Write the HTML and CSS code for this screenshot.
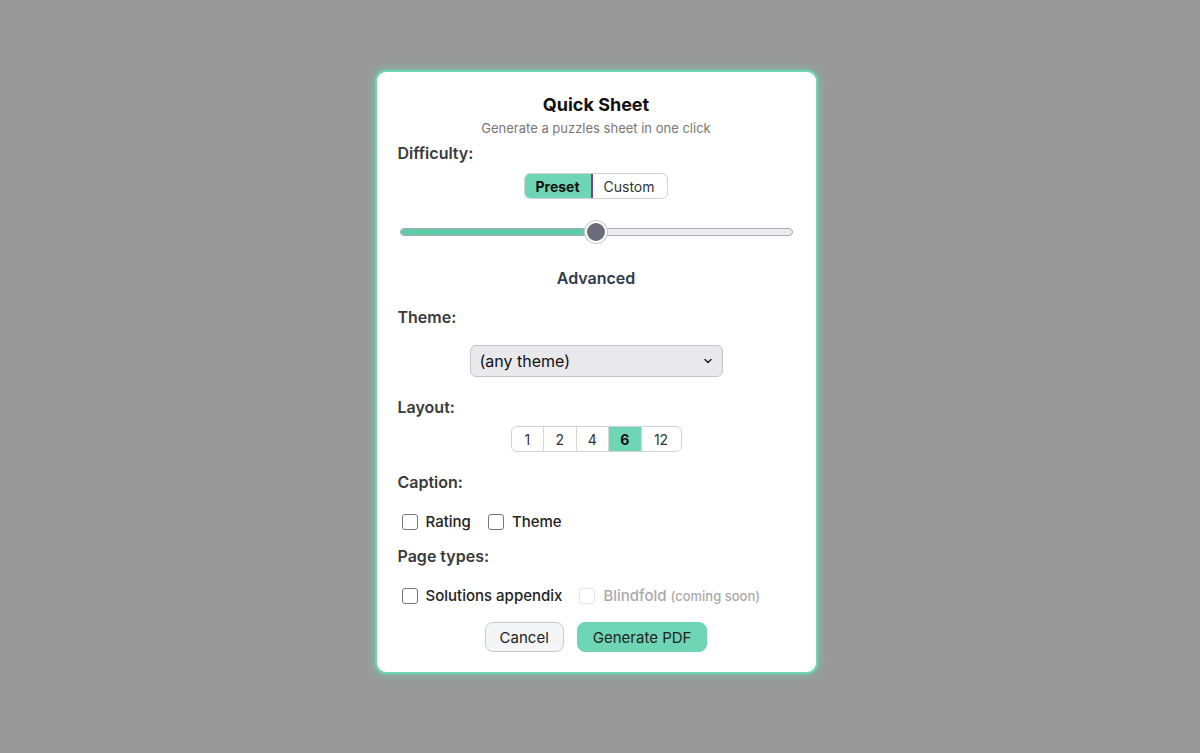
FILE: index.html
```html
<!DOCTYPE html>
<html lang="en">
<head>
    <meta charset="UTF-8">
    <title>Quick Sheet</title>
    <link rel="stylesheet" href="styles.css">
</head>
<body>
    <div class="dialog">
        <h2 class="title">Quick Sheet</h2>
        <p class="subtitle">Generate a puzzles sheet in one click</p>

        <div class="label">Difficulty:</div>
        <div class="center">
            <div class="seg seg-mode">
                <span class="seg-btn on">Preset</span>
                <span class="seg-btn">Custom</span>
            </div>
        </div>

        <div class="slider">
            <div class="slider-fill"></div>
            <div class="slider-thumb"></div>
        </div>

        <div class="advanced">Advanced</div>

        <div class="label">Theme:</div>
        <div class="center">
            <div class="select">
                <span>(any theme)</span>
                <svg width="10" height="10" viewBox="0 0 10 10"><path d="M2 3.5 L5 6.5 L8 3.5" fill="none" stroke="#222" stroke-width="1.5" stroke-linecap="round" stroke-linejoin="round"/></svg>
            </div>
        </div>

        <div class="label">Layout:</div>
        <div class="center">
            <div class="seg seg-layout">
                <span class="seg-btn">1</span>
                <span class="seg-btn">2</span>
                <span class="seg-btn">4</span>
                <span class="seg-btn on">6</span>
                <span class="seg-btn">12</span>
            </div>
        </div>

        <div class="label label-caption">Caption:</div>
        <div class="checks">
            <label class="check"><span class="box"></span>Rating</label>
            <label class="check"><span class="box"></span>Theme</label>
        </div>

        <div class="label">Page types:</div>
        <div class="checks">
            <label class="check"><span class="box"></span>Solutions appendix</label>
            <label class="check off"><span class="box"></span>Blindfold <small>(coming soon)</small></label>
        </div>

        <div class="actions">
            <button class="btn btn-cancel">Cancel</button>
            <button class="btn btn-go">Generate PDF</button>
        </div>
    </div>
</body>
</html>
```

FILE: styles.css
```css
/*初始化*/
html, body {
    margin: 0;
    padding: 0;
}

body {
    background: #999999;
    font-family: Inter, "Noto Sans", sans-serif;
    color: #333;
    min-height: 753px;
    display: flex;
    justify-content: center;
    align-items: flex-start;
    padding-right: 8px;
}

/*弹窗*/
.dialog {
    box-sizing: border-box;
    width: 443px;
    height: 604px;
    margin-top: 70px;
    padding: 21px 21px 0;
    background: #fff;
    border: 2px solid #6fd5b4;
    border-radius: 11px;
    box-shadow: 0 0 8px 2px rgba(110, 214, 180, 0.5);
    display: flex;
    flex-direction: column;
}

.title {
    margin: 0;
    font-size: 18px;
    line-height: 24px;
    font-weight: 700;
    color: #111;
    text-align: center;
}

.subtitle {
    margin: 2px 0 0;
    font-size: 13px;
    line-height: 18px;
    color: #777;
    text-align: center;
}

.label {
    font-size: 16px;
    font-weight: 600;
    line-height: 20px;
    color: #3a3a3a;
    margin-top: 6px;
}

.center {
    display: flex;
    justify-content: center;
}

/*分段按钮*/
.seg {
    display: flex;
    border: 1px solid #d2d2d2;
    border-radius: 6px;
    overflow: hidden;
    background: #fff;
}

.seg-btn {
    box-sizing: border-box;
    display: flex;
    align-items: center;
    justify-content: center;
    font-size: 14px;
    color: #333;
    border-left: 1px solid #d8d8d8;
}

.seg-btn:first-child {
    border-left: none;
}

.seg-btn.on {
    background: #6fd6b5;
    font-weight: 700;
    color: #111;
}

.seg-mode {
    margin-top: 10px;
    height: 24px;
}

.seg-mode .seg-btn {
    padding: 0 11px 0 10px;
}

.seg-mode .seg-btn + .seg-btn {
    border-left: none;
    padding: 0 12px 0 11px;
}

.seg-mode .seg-btn.on {
    border-right: 2px solid #7a3f8f;
}

.seg-layout {
    margin-top: 9px;
    height: 24px;
}

.seg-layout .seg-btn {
    width: 32.5px;
}

.seg-layout .seg-btn:first-child {
    width: 31.5px;
}

.seg-layout .seg-btn:last-child {
    width: 40px;
}

/*滑块*/
.slider {
    position: relative;
    height: 6px;
    margin: 29px 2px 0;
    border: 1px solid #a9a9b3;
    border-radius: 4px;
    background: #ececf0;
}

.slider-fill {
    width: 50%;
    height: 100%;
    background: #5fcba8;
    border-radius: 4px 0 0 4px;
}

/*拖动圆点*/
.slider-thumb {
    position: absolute;
    left: 50%;
    top: 50%;
    width: 18px;
    height: 18px;
    margin: -11px 0 0 -11px;
    border: 2px solid #fff;
    border-radius: 50%;
    background: #6b6b7a;
    box-shadow: 0 0 0 1px #c9c9d0;
}

.advanced {
    margin-top: 31px;
    font-size: 16px;
    font-weight: 600;
    line-height: 22px;
    color: #2f3a4a;
    text-align: center;
}

.advanced + .label {
    margin-top: 18px;
}

/*下拉框*/
.select {
    box-sizing: border-box;
    width: 253px;
    height: 32px;
    margin: 18px 0 14px;
    padding: 0 9px;
    display: flex;
    align-items: center;
    justify-content: space-between;
    background: #e9e9ed;
    border: 1px solid #c4c4c8;
    border-radius: 6px;
    font-size: 16px;
    color: #111;
}

.label-caption {
    margin-top: 20px;
}

/*复选框*/
.checks {
    display: flex;
    gap: 17px;
    margin: 20px 0 9px 4px;
}

.check {
    display: flex;
    align-items: center;
    font-size: 15px;
    font-weight: 500;
    color: #222;
}

.box {
    box-sizing: border-box;
    width: 16px;
    height: 16px;
    margin-right: 8px;
    border: 1px solid #767676;
    border-radius: 3px;
    background: #fff;
}

.check.off {
    color: #aaa;
}

.check.off .box {
    border-color: #e2e2e2;
}

.check small {
    font-size: 13px;
    margin-left: 4px;
    color: #aaa;
}

/*底部按钮*/
.actions {
    display: flex;
    justify-content: center;
    gap: 13px;
    margin-top: 8px;
}

.btn {
    height: 30px;
    padding: 0 14px;
    border-radius: 8px;
    font-family: inherit;
    font-size: 15px;
    color: #222;
}

.btn-cancel {
    background: #f4f5f6;
    border: 1px solid #c9c9c9;
}

.btn-go {
    padding: 0 15px;
    background: #6fd6b5;
    border: 1px solid #6fd6b5;
}
```
